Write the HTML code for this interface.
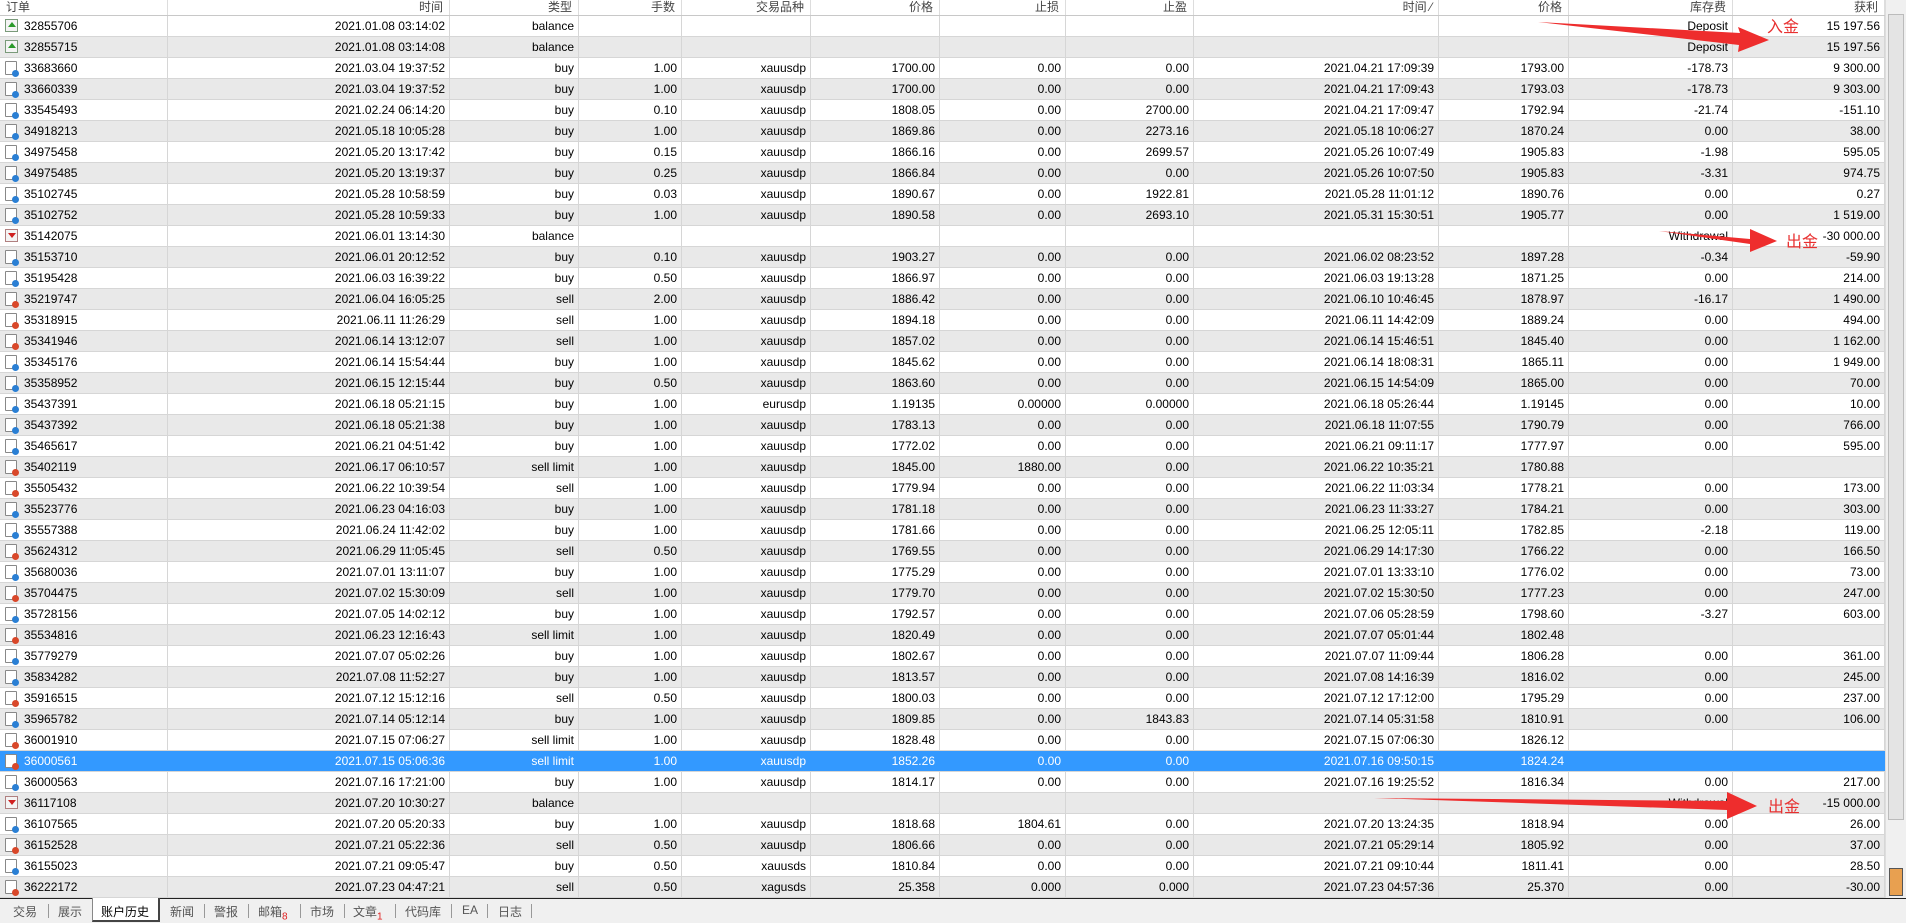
<!DOCTYPE html>
<html><head><meta charset="utf-8"><style>
*{margin:0;padding:0;box-sizing:border-box}
body{width:1906px;height:923px;overflow:hidden;background:#fff;font-family:"Liberation Sans","Noto Sans CJK SC",sans-serif;font-size:12px;color:#000;position:relative}
.g{display:grid;grid-template-columns:168px 282px 129px 103px 129px 129px 126px 128px 245px 130px 164px 152px;width:1885px}
.h{height:16px;background:#fff;border-bottom:1px solid #c8c8c8;color:#444}
.h span{border-right:1px solid #ddd;text-align:right;padding-right:6px;line-height:14px;overflow:hidden}
.h span:first-child{text-align:left;padding-left:6px}
.r{height:21px;line-height:20px;border-bottom:1px solid #d6d6d6}
.r:nth-child(even){background:#e9e9e9}
.r span{border-right:1px solid #d6d6d6;text-align:right;padding-right:4px;white-space:nowrap;overflow:hidden}
.r span:first-child{text-align:left;padding-left:24px;position:relative}
.r.sel{background:#3399ff!important;color:#fff}
.r.sel span{border-right-color:#3399ff}
i{position:absolute;left:5px;top:3px;width:12px;height:14px;display:block}
i.b,i.s{border:1px solid #888;background:#fff;border-radius:1px}
i.b:after,i.s:after{content:"";position:absolute;right:-3px;bottom:-3px;width:7px;height:7px;border-radius:50%;background:#2a7fd4}
i.s:after{background:#d9482a}
i.d,i.w{border:1px solid #7a9a7a;background:#f4f4f4;width:13px;height:13px}
i.d:after{content:"";position:absolute;left:2px;top:2px;border:4px solid transparent;border-bottom:5px solid #2a9a2a;border-top:0}
i.w{border-color:#b08080}
i.w:after{content:"";position:absolute;left:2px;top:3px;border:4px solid transparent;border-top:5px solid #d02020;border-bottom:0}
#tb{position:absolute;left:0;top:898px;width:1906px;height:25px;background:#f0f0f0;border-top:1px solid #222}
#tb span{position:absolute;top:4px;color:#555;font-size:12px}
#tb b{position:absolute;top:5px;width:1px;height:14px;background:#999}
#act{position:absolute;left:92px;top:-1px;width:68px;height:24px;background:#fff;border:1px solid #888;border-top:none;border-right:2px solid #444;border-bottom:2px solid #444}
#sb{position:absolute;left:1885px;top:0;width:21px;height:898px;background:#f0f0f0;border-left:1px solid #ddd}
</style></head><body>
<div class="g h"><span>订单</span><span>时间</span><span>类型</span><span>手数</span><span>交易品种</span><span>价格</span><span>止损</span><span>止盈</span><span>时间 ⁄</span><span>价格</span><span>库存费</span><span>获利</span></div>
<div id="rows">
<div class="g r"><span><i class="d"></i>32855706</span><span>2021.01.08 03:14:02</span><span>balance</span><span></span><span></span><span></span><span></span><span></span><span></span><span></span><span>Deposit</span><span>15 197.56</span></div>
<div class="g r"><span><i class="d"></i>32855715</span><span>2021.01.08 03:14:08</span><span>balance</span><span></span><span></span><span></span><span></span><span></span><span></span><span></span><span>Deposit</span><span>15 197.56</span></div>
<div class="g r"><span><i class="b"></i>33683660</span><span>2021.03.04 19:37:52</span><span>buy</span><span>1.00</span><span>xauusdp</span><span>1700.00</span><span>0.00</span><span>0.00</span><span>2021.04.21 17:09:39</span><span>1793.00</span><span>-178.73</span><span>9 300.00</span></div>
<div class="g r"><span><i class="b"></i>33660339</span><span>2021.03.04 19:37:52</span><span>buy</span><span>1.00</span><span>xauusdp</span><span>1700.00</span><span>0.00</span><span>0.00</span><span>2021.04.21 17:09:43</span><span>1793.03</span><span>-178.73</span><span>9 303.00</span></div>
<div class="g r"><span><i class="b"></i>33545493</span><span>2021.02.24 06:14:20</span><span>buy</span><span>0.10</span><span>xauusdp</span><span>1808.05</span><span>0.00</span><span>2700.00</span><span>2021.04.21 17:09:47</span><span>1792.94</span><span>-21.74</span><span>-151.10</span></div>
<div class="g r"><span><i class="b"></i>34918213</span><span>2021.05.18 10:05:28</span><span>buy</span><span>1.00</span><span>xauusdp</span><span>1869.86</span><span>0.00</span><span>2273.16</span><span>2021.05.18 10:06:27</span><span>1870.24</span><span>0.00</span><span>38.00</span></div>
<div class="g r"><span><i class="b"></i>34975458</span><span>2021.05.20 13:17:42</span><span>buy</span><span>0.15</span><span>xauusdp</span><span>1866.16</span><span>0.00</span><span>2699.57</span><span>2021.05.26 10:07:49</span><span>1905.83</span><span>-1.98</span><span>595.05</span></div>
<div class="g r"><span><i class="b"></i>34975485</span><span>2021.05.20 13:19:37</span><span>buy</span><span>0.25</span><span>xauusdp</span><span>1866.84</span><span>0.00</span><span>0.00</span><span>2021.05.26 10:07:50</span><span>1905.83</span><span>-3.31</span><span>974.75</span></div>
<div class="g r"><span><i class="b"></i>35102745</span><span>2021.05.28 10:58:59</span><span>buy</span><span>0.03</span><span>xauusdp</span><span>1890.67</span><span>0.00</span><span>1922.81</span><span>2021.05.28 11:01:12</span><span>1890.76</span><span>0.00</span><span>0.27</span></div>
<div class="g r"><span><i class="b"></i>35102752</span><span>2021.05.28 10:59:33</span><span>buy</span><span>1.00</span><span>xauusdp</span><span>1890.58</span><span>0.00</span><span>2693.10</span><span>2021.05.31 15:30:51</span><span>1905.77</span><span>0.00</span><span>1 519.00</span></div>
<div class="g r"><span><i class="w"></i>35142075</span><span>2021.06.01 13:14:30</span><span>balance</span><span></span><span></span><span></span><span></span><span></span><span></span><span></span><span>Withdrawal</span><span>-30 000.00</span></div>
<div class="g r"><span><i class="b"></i>35153710</span><span>2021.06.01 20:12:52</span><span>buy</span><span>0.10</span><span>xauusdp</span><span>1903.27</span><span>0.00</span><span>0.00</span><span>2021.06.02 08:23:52</span><span>1897.28</span><span>-0.34</span><span>-59.90</span></div>
<div class="g r"><span><i class="b"></i>35195428</span><span>2021.06.03 16:39:22</span><span>buy</span><span>0.50</span><span>xauusdp</span><span>1866.97</span><span>0.00</span><span>0.00</span><span>2021.06.03 19:13:28</span><span>1871.25</span><span>0.00</span><span>214.00</span></div>
<div class="g r"><span><i class="s"></i>35219747</span><span>2021.06.04 16:05:25</span><span>sell</span><span>2.00</span><span>xauusdp</span><span>1886.42</span><span>0.00</span><span>0.00</span><span>2021.06.10 10:46:45</span><span>1878.97</span><span>-16.17</span><span>1 490.00</span></div>
<div class="g r"><span><i class="s"></i>35318915</span><span>2021.06.11 11:26:29</span><span>sell</span><span>1.00</span><span>xauusdp</span><span>1894.18</span><span>0.00</span><span>0.00</span><span>2021.06.11 14:42:09</span><span>1889.24</span><span>0.00</span><span>494.00</span></div>
<div class="g r"><span><i class="s"></i>35341946</span><span>2021.06.14 13:12:07</span><span>sell</span><span>1.00</span><span>xauusdp</span><span>1857.02</span><span>0.00</span><span>0.00</span><span>2021.06.14 15:46:51</span><span>1845.40</span><span>0.00</span><span>1 162.00</span></div>
<div class="g r"><span><i class="b"></i>35345176</span><span>2021.06.14 15:54:44</span><span>buy</span><span>1.00</span><span>xauusdp</span><span>1845.62</span><span>0.00</span><span>0.00</span><span>2021.06.14 18:08:31</span><span>1865.11</span><span>0.00</span><span>1 949.00</span></div>
<div class="g r"><span><i class="b"></i>35358952</span><span>2021.06.15 12:15:44</span><span>buy</span><span>0.50</span><span>xauusdp</span><span>1863.60</span><span>0.00</span><span>0.00</span><span>2021.06.15 14:54:09</span><span>1865.00</span><span>0.00</span><span>70.00</span></div>
<div class="g r"><span><i class="b"></i>35437391</span><span>2021.06.18 05:21:15</span><span>buy</span><span>1.00</span><span>eurusdp</span><span>1.19135</span><span>0.00000</span><span>0.00000</span><span>2021.06.18 05:26:44</span><span>1.19145</span><span>0.00</span><span>10.00</span></div>
<div class="g r"><span><i class="b"></i>35437392</span><span>2021.06.18 05:21:38</span><span>buy</span><span>1.00</span><span>xauusdp</span><span>1783.13</span><span>0.00</span><span>0.00</span><span>2021.06.18 11:07:55</span><span>1790.79</span><span>0.00</span><span>766.00</span></div>
<div class="g r"><span><i class="b"></i>35465617</span><span>2021.06.21 04:51:42</span><span>buy</span><span>1.00</span><span>xauusdp</span><span>1772.02</span><span>0.00</span><span>0.00</span><span>2021.06.21 09:11:17</span><span>1777.97</span><span>0.00</span><span>595.00</span></div>
<div class="g r"><span><i class="s"></i>35402119</span><span>2021.06.17 06:10:57</span><span>sell limit</span><span>1.00</span><span>xauusdp</span><span>1845.00</span><span>1880.00</span><span>0.00</span><span>2021.06.22 10:35:21</span><span>1780.88</span><span></span><span></span></div>
<div class="g r"><span><i class="s"></i>35505432</span><span>2021.06.22 10:39:54</span><span>sell</span><span>1.00</span><span>xauusdp</span><span>1779.94</span><span>0.00</span><span>0.00</span><span>2021.06.22 11:03:34</span><span>1778.21</span><span>0.00</span><span>173.00</span></div>
<div class="g r"><span><i class="b"></i>35523776</span><span>2021.06.23 04:16:03</span><span>buy</span><span>1.00</span><span>xauusdp</span><span>1781.18</span><span>0.00</span><span>0.00</span><span>2021.06.23 11:33:27</span><span>1784.21</span><span>0.00</span><span>303.00</span></div>
<div class="g r"><span><i class="b"></i>35557388</span><span>2021.06.24 11:42:02</span><span>buy</span><span>1.00</span><span>xauusdp</span><span>1781.66</span><span>0.00</span><span>0.00</span><span>2021.06.25 12:05:11</span><span>1782.85</span><span>-2.18</span><span>119.00</span></div>
<div class="g r"><span><i class="s"></i>35624312</span><span>2021.06.29 11:05:45</span><span>sell</span><span>0.50</span><span>xauusdp</span><span>1769.55</span><span>0.00</span><span>0.00</span><span>2021.06.29 14:17:30</span><span>1766.22</span><span>0.00</span><span>166.50</span></div>
<div class="g r"><span><i class="b"></i>35680036</span><span>2021.07.01 13:11:07</span><span>buy</span><span>1.00</span><span>xauusdp</span><span>1775.29</span><span>0.00</span><span>0.00</span><span>2021.07.01 13:33:10</span><span>1776.02</span><span>0.00</span><span>73.00</span></div>
<div class="g r"><span><i class="s"></i>35704475</span><span>2021.07.02 15:30:09</span><span>sell</span><span>1.00</span><span>xauusdp</span><span>1779.70</span><span>0.00</span><span>0.00</span><span>2021.07.02 15:30:50</span><span>1777.23</span><span>0.00</span><span>247.00</span></div>
<div class="g r"><span><i class="b"></i>35728156</span><span>2021.07.05 14:02:12</span><span>buy</span><span>1.00</span><span>xauusdp</span><span>1792.57</span><span>0.00</span><span>0.00</span><span>2021.07.06 05:28:59</span><span>1798.60</span><span>-3.27</span><span>603.00</span></div>
<div class="g r"><span><i class="s"></i>35534816</span><span>2021.06.23 12:16:43</span><span>sell limit</span><span>1.00</span><span>xauusdp</span><span>1820.49</span><span>0.00</span><span>0.00</span><span>2021.07.07 05:01:44</span><span>1802.48</span><span></span><span></span></div>
<div class="g r"><span><i class="b"></i>35779279</span><span>2021.07.07 05:02:26</span><span>buy</span><span>1.00</span><span>xauusdp</span><span>1802.67</span><span>0.00</span><span>0.00</span><span>2021.07.07 11:09:44</span><span>1806.28</span><span>0.00</span><span>361.00</span></div>
<div class="g r"><span><i class="b"></i>35834282</span><span>2021.07.08 11:52:27</span><span>buy</span><span>1.00</span><span>xauusdp</span><span>1813.57</span><span>0.00</span><span>0.00</span><span>2021.07.08 14:16:39</span><span>1816.02</span><span>0.00</span><span>245.00</span></div>
<div class="g r"><span><i class="s"></i>35916515</span><span>2021.07.12 15:12:16</span><span>sell</span><span>0.50</span><span>xauusdp</span><span>1800.03</span><span>0.00</span><span>0.00</span><span>2021.07.12 17:12:00</span><span>1795.29</span><span>0.00</span><span>237.00</span></div>
<div class="g r"><span><i class="b"></i>35965782</span><span>2021.07.14 05:12:14</span><span>buy</span><span>1.00</span><span>xauusdp</span><span>1809.85</span><span>0.00</span><span>1843.83</span><span>2021.07.14 05:31:58</span><span>1810.91</span><span>0.00</span><span>106.00</span></div>
<div class="g r"><span><i class="s"></i>36001910</span><span>2021.07.15 07:06:27</span><span>sell limit</span><span>1.00</span><span>xauusdp</span><span>1828.48</span><span>0.00</span><span>0.00</span><span>2021.07.15 07:06:30</span><span>1826.12</span><span></span><span></span></div>
<div class="g r sel"><span><i class="s"></i>36000561</span><span>2021.07.15 05:06:36</span><span>sell limit</span><span>1.00</span><span>xauusdp</span><span>1852.26</span><span>0.00</span><span>0.00</span><span>2021.07.16 09:50:15</span><span>1824.24</span><span></span><span></span></div>
<div class="g r"><span><i class="b"></i>36000563</span><span>2021.07.16 17:21:00</span><span>buy</span><span>1.00</span><span>xauusdp</span><span>1814.17</span><span>0.00</span><span>0.00</span><span>2021.07.16 19:25:52</span><span>1816.34</span><span>0.00</span><span>217.00</span></div>
<div class="g r"><span><i class="w"></i>36117108</span><span>2021.07.20 10:30:27</span><span>balance</span><span></span><span></span><span></span><span></span><span></span><span></span><span></span><span>Withdrawal</span><span>-15 000.00</span></div>
<div class="g r"><span><i class="b"></i>36107565</span><span>2021.07.20 05:20:33</span><span>buy</span><span>1.00</span><span>xauusdp</span><span>1818.68</span><span>1804.61</span><span>0.00</span><span>2021.07.20 13:24:35</span><span>1818.94</span><span>0.00</span><span>26.00</span></div>
<div class="g r"><span><i class="s"></i>36152528</span><span>2021.07.21 05:22:36</span><span>sell</span><span>0.50</span><span>xauusdp</span><span>1806.66</span><span>0.00</span><span>0.00</span><span>2021.07.21 05:29:14</span><span>1805.92</span><span>0.00</span><span>37.00</span></div>
<div class="g r"><span><i class="b"></i>36155023</span><span>2021.07.21 09:05:47</span><span>buy</span><span>0.50</span><span>xauusds</span><span>1810.84</span><span>0.00</span><span>0.00</span><span>2021.07.21 09:10:44</span><span>1811.41</span><span>0.00</span><span>28.50</span></div>
<div class="g r"><span><i class="s"></i>36222172</span><span>2021.07.23 04:47:21</span><span>sell</span><span>0.50</span><span>xagusds</span><span>25.358</span><span>0.000</span><span>0.000</span><span>2021.07.23 04:57:36</span><span>25.370</span><span>0.00</span><span>-30.00</span></div>
</div>
<div id="sb"><div style="position:absolute;left:2px;top:14px;width:16px;height:806px;background:#e4e4e4;border:1px solid #bbb"></div><div style="position:absolute;left:3px;top:868px;width:14px;height:28px;background:#e8a050;border:1px solid #555"></div></div>
<svg style="position:absolute;left:0;top:0" width="1906" height="923">
<polygon points="1538,22 1740,33 1738,27 1769,40 1738,52 1739,45" fill="#ee2d2d"/>
<polygon points="1659,231 1750,239 1750,229 1777,241 1750,252 1750,244" fill="#ee2d2d"/>
<polygon points="1374,798 1727,801 1727,792 1757,806 1727,819 1727,810" fill="#ee2d2d"/>
<g fill="#e83030" font-family="Noto Sans CJK SC,sans-serif" font-size="16"><text x="1767" y="32">入金</text><text x="1786" y="247">出金</text><text x="1768" y="812">出金</text></g>
</svg>
<div id="tb"><div id="act"></div>
<span style="left:13px">交易</span><b style="left:48px"></b><span style="left:58px">展示</span><span style="left:101px;color:#000">账户历史</span><span style="left:170px">新闻</span><b style="left:204px"></b><span style="left:214px">警报</span><b style="left:248px"></b><span style="left:258px">邮箱<sub style="color:#e02020;font-size:10px">8</sub></span><b style="left:300px"></b><span style="left:310px">市场</span><b style="left:344px"></b><span style="left:353px">文章<sub style="color:#e02020;font-size:10px">1</sub></span><b style="left:395px"></b><span style="left:405px">代码库</span><b style="left:451px"></b><span style="left:462px">EA</span><b style="left:487px"></b><span style="left:498px">日志</span><b style="left:531px"></b>
</div>
</body></html>
